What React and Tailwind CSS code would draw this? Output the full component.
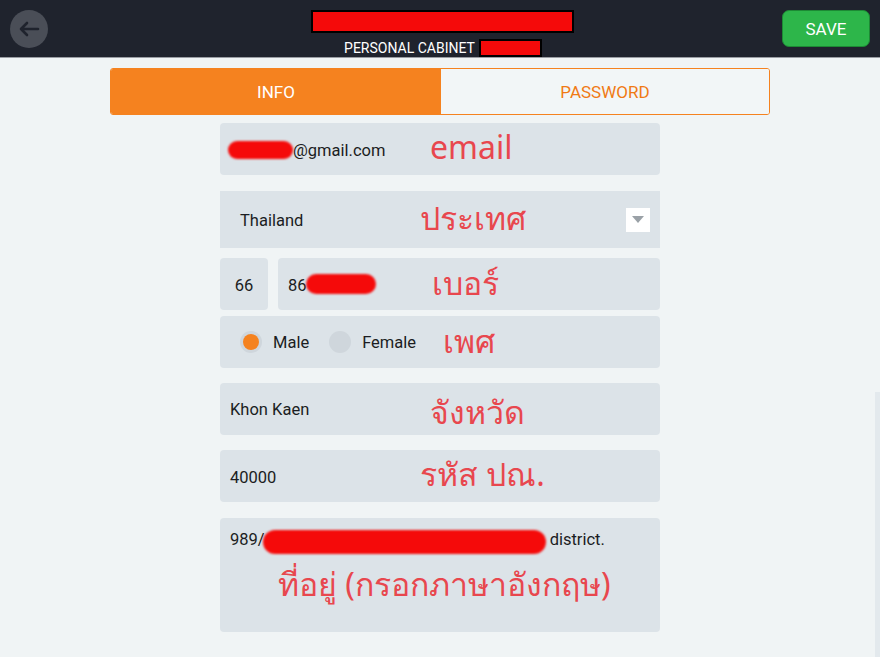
import React from "react";

const font = { fontFamily: "Roboto, 'Noto Sans', sans-serif" };

function Note({ children, className }) {
  return (
    <span
      className={"absolute text-[32px] leading-none text-[#e8474e] whitespace-nowrap " + className}
      style={{ fontFamily: "'Noto Sans', 'DejaVu Sans', sans-serif" }}
    >
      {children}
    </span>
  );
}

function Blob({ className }) {
  return <span className={"absolute bg-[#f50a0a] rounded-full " + className} />;
}

export default function App() {
  return (
    <div className="w-[880px] h-[657px] bg-[#f0f4f5] overflow-hidden relative" style={font}>
      {/* header */}
      <div className="h-[58px] bg-[#1f232d] border-b border-[#9a9da3] flex items-center justify-between px-[10px]">
        <div className="w-[38px] h-[38px] rounded-full bg-[#4a4e57] flex items-center justify-center">
          <svg width="22" height="16" viewBox="0 0 22 16" fill="none" stroke="#1f232d" strokeWidth="2.6" strokeLinecap="round" strokeLinejoin="round">
            <path d="M20 8H3M9 2L3 8l6 6" />
          </svg>
        </div>
        <div className="flex flex-col items-center pt-[11px] ml-[54px]">
          <div className="w-[263px] h-[23px] bg-[#f50a0a] border-2 border-black" />
          <div className="flex items-center mt-[5px] ml-[2px]">
            <span className="text-white text-[14px]">PERSONAL CABINET</span>
            <span className="ml-[4px] w-[63px] h-[18px] bg-[#f50a0a] border-2 border-black" />
          </div>
        </div>
        <button className="w-[88px] h-[37px] rounded-[7px] bg-[#2db64a] text-white text-[17px] border border-[#1c8a34] mb-[1px] pt-[3px]">
          SAVE
        </button>
      </div>

      {/* tabs */}
      <div className="mt-[10px] ml-[110px] w-[660px] h-[47px] flex rounded-[3px] border border-[#f5821f] overflow-hidden">
        <div className="w-[330px] bg-[#f5821f] text-white text-[17px] flex items-center justify-center pt-[2px]">INFO</div>
        <div className="flex-1 bg-[#f2f6f7] text-[#f07a14] text-[17px] flex items-center justify-center pt-[2px]">PASSWORD</div>
      </div>

      {/* form */}
      <div className="ml-[220px] w-[440px] flex flex-col text-[16.5px] text-[#1b1d22]">
        {/* email */}
        <div className="mt-[8px] h-[52px] bg-[#dce3e8] rounded-[4px] relative flex items-center pl-[10px] pt-[4px]">
          <span className="relative inline-block w-[63px] h-[14px]">
            <Blob className="left-[-2px] top-[-3px] w-[65px] h-[18px] blur-[1px]" />
          </span>
          <span>@gmail.com</span>
          <Note className="left-[210px] top-[8px]">email</Note>
        </div>

        {/* country */}
        <div className="mt-[16px] h-[57px] bg-[#dce3e8] relative flex items-center pl-[20px] pr-[10px]">
          <span className="pt-[4px]">Thailand</span>
          <Note className="left-[200px] top-[11px]">ประเทศ</Note>
          <div className="ml-auto w-[24px] h-[24px] bg-white flex items-center justify-center">
            <svg width="12" height="8" viewBox="0 0 12 8"><path d="M0 0h12L6 7z" fill="#9aa1a7" /></svg>
          </div>
        </div>

        {/* phone */}
        <div className="mt-[10px] h-[52px] flex gap-[10px]">
          <div className="w-[48px] bg-[#dce3e8] rounded-[4px] flex items-center justify-center pt-[4px]">66</div>
          <div className="flex-1 bg-[#dce3e8] rounded-[4px] relative flex items-center pl-[10px] pt-[4px]">
            <span>86</span>
            <Blob className="left-[28px] top-[16px] w-[70px] h-[20px] blur-[1px]" />
            <Note className="left-[154px] top-[9px]">เบอร์</Note>
          </div>
        </div>

        {/* gender */}
        <div className="mt-[6px] h-[52px] bg-[#dce3e8] rounded-[4px] relative flex items-center pl-[20px]">
          <span className="w-[22px] h-[22px] rounded-full bg-[#cfd6dc] flex items-center justify-center">
            <span className="w-[16px] h-[16px] rounded-full bg-[#f5821f]" />
          </span>
          <span className="ml-[11px] pt-[2px]">Male</span>
          <span className="ml-[20px] w-[22px] h-[22px] rounded-full bg-[#cfd6dc]" />
          <span className="ml-[11px] pt-[2px]">Female</span>
          <Note className="left-[223px] top-[9px]">เพศ</Note>
        </div>

        {/* province */}
        <div className="mt-[15px] h-[52px] bg-[#dce3e8] rounded-[4px] relative flex items-center pl-[10px] pt-[3px]">
          <span>Khon Kaen</span>
          <Note className="left-[210px] top-[13px]">จังหวัด</Note>
        </div>

        {/* postcode */}
        <div className="mt-[15px] h-[52px] bg-[#dce3e8] rounded-[4px] relative flex items-center pl-[10px] pt-[4px]">
          <span>40000</span>
          <Note className="left-[200px] top-[8px]">รหัส ปณ.</Note>
        </div>

        {/* address */}
        <div className="mt-[16px] h-[114px] bg-[#dce3e8] rounded-[4px] relative pl-[10px] pt-[10px]">
          <div className="flex items-center">
            <span>989/</span>
            <span className="w-[285px]" />
            <span>district.</span>
          </div>
          <Blob className="left-[43px] top-[12px] w-[283px] h-[24px] blur-[1px]" />
          <Note className="left-[58px] top-[50px]">ที่อยู่ (กรอกภาษาอังกฤษ)</Note>
        </div>
      </div>

      {/* scrollbar */}
      <div className="absolute right-0 top-[392px] w-[5px] h-[265px] bg-[#e3e9ed]" />
    </div>
  );
}
